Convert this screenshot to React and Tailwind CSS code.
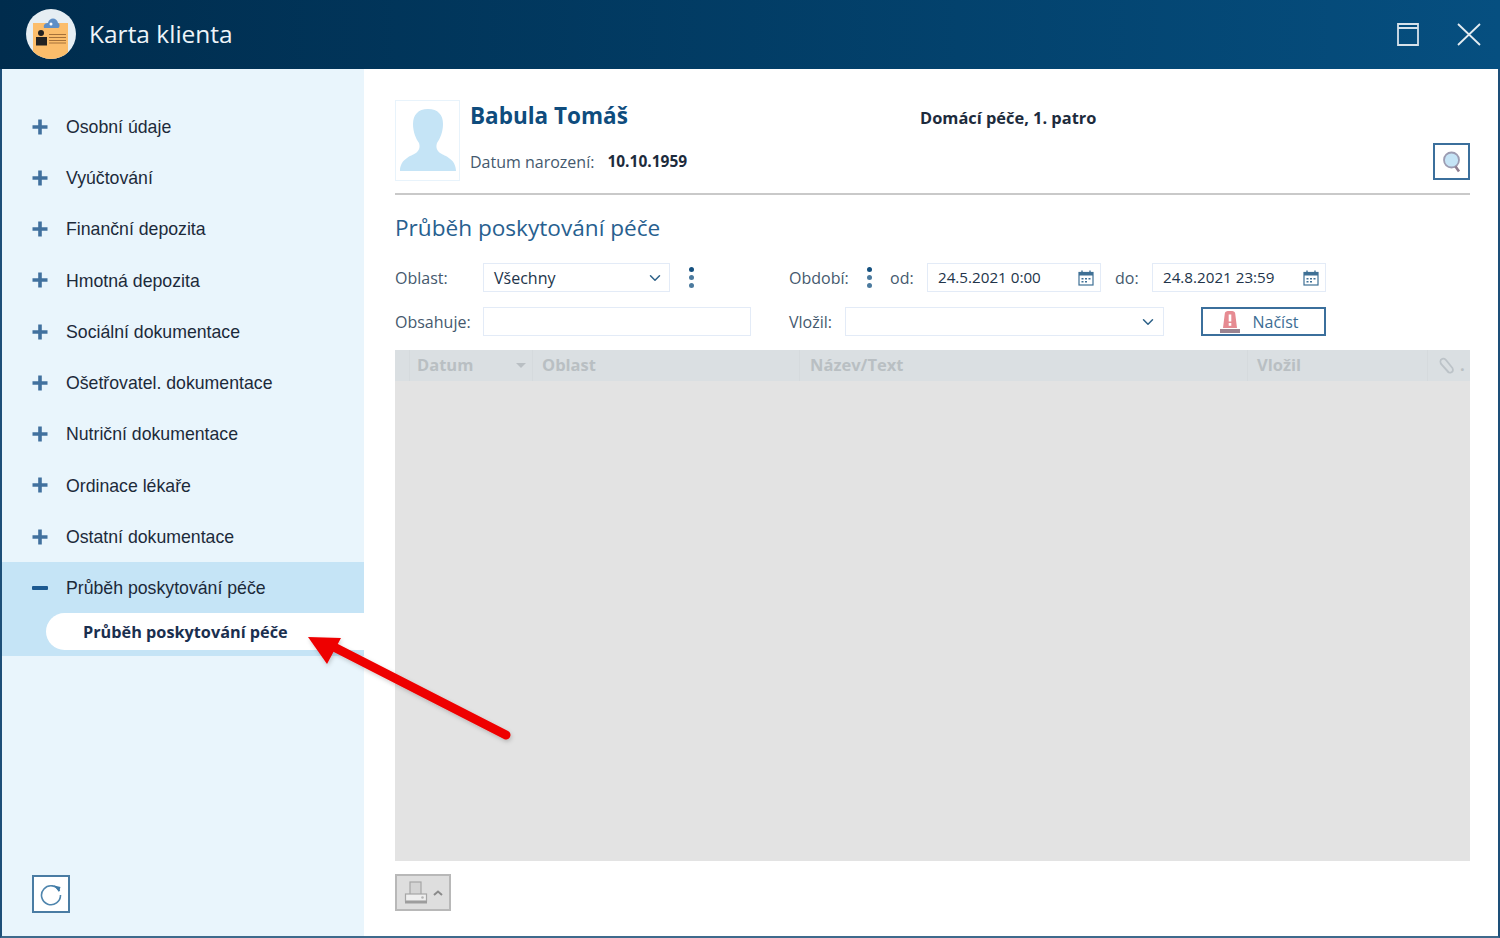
import { ChevronDown } from 'lucide-react'

const menuItems = [
  'Osobní údaje',
  'Vyúčtování',
  'Finanční depozita',
  'Hmotná depozita',
  'Sociální dokumentace',
  'Ošetřovatel. dokumentace',
  'Nutriční dokumentace',
  'Ordinace lékaře',
  'Ostatní dokumentace',
]

const Logo = () => (
  <svg width="50" height="50" viewBox="0 0 50 50" className="shrink-0">
    <defs>
      <clipPath id="logoClip"><circle cx="25" cy="25" r="25" /></clipPath>
    </defs>
    <circle cx="25" cy="25" r="25" fill="#e6eef3" />
    <rect x="7" y="14" width="35" height="36" fill="#fbbd6b" clipPath="url(#logoClip)" />
    <path d="M18 19c-1-4 2-5 4-5 1-6 9-6 10 0 2 0 2 5 0 5z" fill="#5e8fc7" />
    <circle cx="25" cy="15" r="1.500" fill="#ffffff" />
    <circle cx="15" cy="24" r="3" fill="#222222" />
    <rect x="10" y="28" width="11" height="8.500" fill="#222222" />
    <path d="M23 25.500h17M23 28.500h17M23 31.500h17M23 34h17" stroke="#a5713a" strokeWidth="1" />
  </svg>
)

const Plus = () => (
  <svg width="16" height="16" viewBox="0 0 16 16">
    <path d="M8 0.500v15M0.500 8h15" stroke="#41719e" strokeWidth="3.600" />
  </svg>
)

const Kebab = () => (
  <span className="flex flex-col gap-[3px]">
    <span className="w-[5px] h-[5px] rounded-full bg-[#14507f]" />
    <span className="w-[5px] h-[5px] rounded-full bg-[#4b7a9e]" />
    <span className="w-[5px] h-[5px] rounded-full bg-[#4b7a9e]" />
  </span>
)

const CalendarIcon = () => (
  <svg width="16" height="16" viewBox="0 0 16 16" className="shrink-0">
    <rect x="1" y="2.500" width="14" height="12.500" fill="#ffffff" stroke="#3f7095" strokeWidth="1.200" />
    <rect x="1" y="2" width="14" height="3.500" fill="#3f7095" />
    <path d="M4 0.500v3M12 0.500v3" stroke="#3f7095" strokeWidth="1.400" />
    <path d="M3.500 8h2v1.500h-2zM7 8h2v1.500H7zM10.500 8h2v1.500h-2zM3.500 11h2v1.500h-2zM7 11h2v1.500H7z" fill="#3f7095" />
  </svg>
)

const Field = ({ className, children }) => (
  <div className={`h-[29px] flex items-center justify-between bg-white border border-[#e3ebf7] ${className}`}>
    {children}
  </div>
)

const Siren = () => (
  <svg width="22" height="24" viewBox="0 0 22 24">
    <path d="M4 18l1.800-14.500C6 1.500 7.500 1 11 1s5 .5 5.200 2.500L18 18z" fill="#e68b92" />
    <rect x="9.700" y="4.500" width="2.600" height="7" fill="#ffffff" />
    <rect x="9.700" y="13" width="2.600" height="2.800" fill="#ffffff" />
    <rect x="1" y="19" width="20" height="4" fill="#9b8390" />
  </svg>
)

export default function App() {
  return (
    <div className="w-[1500px] h-[938px] flex flex-col overflow-hidden bg-white relative font-['Open_Sans','Noto_Sans',sans-serif]">
      {/* Title bar */}
      <header className="h-[69px] shrink-0 flex items-center bg-gradient-to-r from-[#002c4d] to-[#064f80] pl-[26px] pr-[19px] pb-[1px]">
        <Logo />
        <h1 className="ml-[13px] text-[24.500px] text-[#eef4f8]">Karta klienta</h1>
        <div className="ml-auto flex items-center gap-[38px]">
          <svg width="22" height="23" viewBox="0 0 22 23">
            <path d="M1 1h20v21H1zM1 5h20" fill="none" stroke="#d7e2ea" strokeWidth="1.800" />
          </svg>
          <svg width="24" height="23" viewBox="0 0 24 23">
            <path d="M1 1l22 21M23 1L1 22" stroke="#e4ecf1" strokeWidth="1.800" />
          </svg>
        </div>
      </header>

      <div className="flex-1 flex min-h-0 border-l-2 border-r-2 border-b-2 border-l-[#1d4f78] border-r-[#1d4f78] border-b-[#3f6a8c]">
        {/* Sidebar */}
        <aside className="w-[362px] shrink-0 bg-[#e9f5fc] pt-[32px] flex flex-col font-['Liberation_Sans',sans-serif] text-[17.700px] text-[#1c2a3a]">
          {menuItems.map((item) => (
            <div key={item} className="h-[51.250px] flex items-center pl-[30px]">
              <Plus />
              <span className="ml-[18px] pt-[1px]">{item}</span>
            </div>
          ))}
          <div className="bg-[#c5e4f6]">
            <div className="h-[51px] flex items-center pl-[30px]">
              <span className="w-[16px] h-[4px] bg-[#1d5a91] rounded-[1px]" />
              <span className="ml-[18px] pt-[1px]">Průběh poskytování péče</span>
            </div>
            <div className="h-[43px] pl-[44px]">
              <div className="h-[37px] flex items-center pl-[37px] bg-white rounded-l-full font-['Open_Sans',sans-serif] font-bold text-[16.250px] text-[#1a2f4f]">
                Průběh poskytování péče
              </div>
            </div>
          </div>
          <button className="mt-auto mb-[23px] ml-[30px] w-[38px] h-[38px] flex items-center justify-center bg-white border-2 border-[#4a7ca3]">
            <svg width="24" height="24" viewBox="0 0 24 24">
              <path d="M20.500 9A9.500 9.500 0 1 0 21.500 13" fill="none" stroke="#4f85ad" strokeWidth="1.600" />
              <path d="M15 3.500l6.500 1.500-1.500 5z" fill="#3f7aa6" />
            </svg>
          </button>
        </aside>

        {/* Content */}
        <main className="flex-1 min-w-0 pl-[31px] pr-[28px] pt-[31px] flex flex-col text-[16px] text-[#45596e]">
          <section className="h-[95px] shrink-0 flex border-b-2 border-[#c9c9c9] relative">
            <div className="w-[65px] h-[81px] border border-[#e8f3fb] flex items-end justify-center pb-[9px]">
              <svg width="56" height="62" viewBox="0 0 56 62">
                <path d="M28 0c10 0 15 6 15 15 0 8-3 15-6 19-1 3-1 7 3 10 5 3 16 6 16 18H0c0-12 11-15 16-18 4-3 4-7 3-10-3-4-6-11-6-19C13 6 18 0 28 0z" fill="#c5e4f6" />
              </svg>
            </div>
            <div className="ml-[10px] flex flex-col">
              <h2 className="text-[22.500px] leading-[31px] font-bold text-[#0f4c7d]">Babula Tomáš</h2>
              <div className="mt-[20px] flex items-center h-[22px]">
                <span>Datum narození:</span>
                <strong className="ml-[13px] text-[15.500px] text-[#1d2b3c] font-bold">10.10.1959</strong>
              </div>
            </div>
            <div className="absolute left-[525px] top-[6px] text-[16.400px] font-bold text-[#1d2b3c]">Domácí péče, 1. patro</div>
            <button className="absolute right-0 top-[43px] w-[37px] h-[37px] bg-white border-2 border-[#3b6f9c] flex items-center justify-center">
              <svg width="20" height="22" viewBox="0 0 20 22">
                <circle cx="9.500" cy="9" r="7.500" fill="#c5e4f6" stroke="#9c9cb2" strokeWidth="1.800" />
                <path d="M13.500 15.500l3.500 5" stroke="#8f7f91" strokeWidth="2.600" />
              </svg>
            </button>
          </section>

          <h3 className="mt-[16px] h-[34px] leading-[34px] text-[22.600px] text-[#27608f]">Průběh poskytování péče</h3>

          {/* Filters */}
          <div className="mt-[18px] h-[29px] flex items-center shrink-0">
            <label className="w-[88px]">Oblast:</label>
            <Field className="w-[187px] pl-[10px] pr-[5px] text-[#22344a]">
              Všechny
              <ChevronDown size={18} className="text-[#2d6188]" />
            </Field>
            <div className="w-[119px] pl-[19px]"><Kebab /></div>
            <label className="w-[70px]">Období:</label>
            <div className="w-[31px] pl-[8px]"><Kebab /></div>
            <label className="w-[37px]">od:</label>
            <Field className="w-[174px] pl-[10px] pr-[6px] text-[15.200px] text-[#22344a]">
              24.5.2021 0:00
              <CalendarIcon />
            </Field>
            <label className="w-[51px] pl-[14px]">do:</label>
            <Field className="w-[174px] pl-[10px] pr-[6px] text-[15.200px] text-[#22344a]">
              24.8.2021 23:59
              <CalendarIcon />
            </Field>
          </div>
          <div className="mt-[15px] h-[29px] flex items-center shrink-0">
            <label className="w-[88px]">Obsahuje:</label>
            <Field className="w-[268px]" />
            <label className="w-[38px]" />
            <label className="w-[56px]">Vložil:</label>
            <Field className="w-[319px] pr-[6px] !justify-end">
              <ChevronDown size={18} className="text-[#2d6188]" />
            </Field>
            <button className="ml-[37px] w-[125px] h-[29px] flex items-center justify-center gap-[12px] bg-white border-2 border-[#3b6f9c] text-[#3c6d94] pr-[10px]">
              <Siren />
              Načíst
            </button>
          </div>

          {/* Grid */}
          <div className="mt-[14px] h-[511px] shrink-0 flex flex-col bg-[#e3e3e3]">
            <div className="h-[31px] flex items-center bg-[#dadfe2] text-[16.500px] font-bold text-[#b9bfc3]">
              <div className="w-[15px] h-full border-r border-[#d5dadd]" />
              <div className="w-[123px] h-full flex items-center justify-between pl-[7px] pr-[6px] border-r border-[#d5dadd]">
                Datum
                <span className="w-0 h-0 border-x-[5px] border-x-transparent border-t-[5px] border-t-[#b9bfc3]" />
              </div>
              <div className="w-[267px] h-full flex items-center pl-[9px] border-r border-[#d5dadd]">Oblast</div>
              <div className="w-[448px] h-full flex items-center pl-[10px] border-r border-[#d5dadd]">Název/Text</div>
              <div className="w-[180px] h-full flex items-center pl-[9px] border-r border-[#d5dadd]">Vložil</div>
              <div className="flex-1 h-full flex items-center pl-[9px]">
                <svg width="20" height="20" viewBox="0 0 18 18">
                  <path d="M3 6.500l6.500 7.500c2 2 6 .5 4.500-3L8 3.500c-2-2-5-1-5 1.500 0 1 .5 2 1.500 3l6 6.500" fill="none" stroke="#bcc3c8" strokeWidth="1.500" />
                </svg>
                <span className="ml-[3px]">.</span>
              </div>
            </div>
          </div>

          {/* Print */}
          <button className="mt-[13px] w-[56px] h-[37px] flex items-center justify-center gap-[5px] bg-[#dedede] border-2 border-[#b8b8b8]">
            <svg width="24" height="24" viewBox="0 0 24 24">
              <rect x="6" y="1" width="11" height="13" fill="#d4d4d4" stroke="#a6a6a6" strokeWidth="1.200" />
              <rect x="1.500" y="13" width="21" height="7" fill="#efefef" stroke="#a6a6a6" strokeWidth="1.200" />
              <rect x="1" y="20" width="22" height="2.500" fill="#9d9d9d" />
              <circle cx="18.500" cy="16.500" r="1.300" fill="#b5b5b5" />
            </svg>
            <svg width="10" height="6" viewBox="0 0 10 6">
              <path d="M1 5l4-3.500L9 5" fill="none" stroke="#8a8a8a" strokeWidth="2" />
            </svg>
          </button>
        </main>
      </div>

      {/* Red arrow annotation over the page */}
      <svg className="absolute left-[300px] top-[625px] pointer-events-none" width="220" height="125" viewBox="0 0 220 125">
        <defs>
          <filter id="arrowShadow" x="-10%" y="-10%" width="120%" height="130%">
            <feDropShadow dx="1" dy="2" stdDeviation="2" floodColor="#000000" floodOpacity="0.200" />
          </filter>
        </defs>
        <g filter="url(#arrowShadow)">
          <path d="M206 110L30 20" stroke="#ee0000" strokeWidth="9" strokeLinecap="round" />
          <path d="M8 12L41 13L27 39z" fill="#ee0000" />
        </g>
      </svg>
    </div>
  )
}
